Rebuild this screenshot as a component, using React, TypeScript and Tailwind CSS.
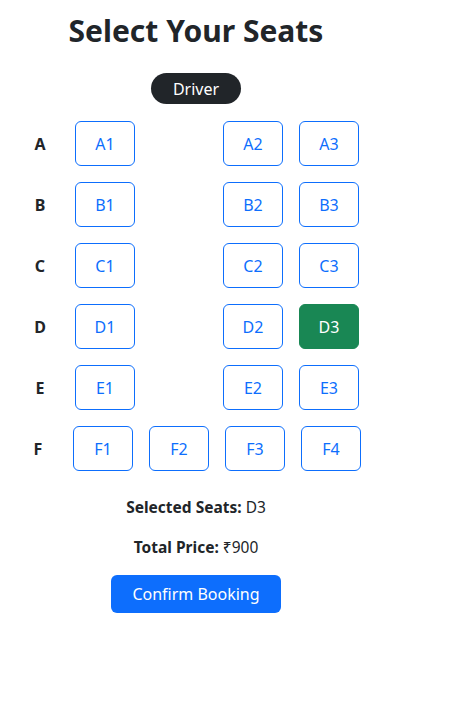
const rows: { label: string; seats: (string | null)[] }[] = [
	{ label: "A", seats: ["A1", null, "A2", "A3"] },
	{ label: "B", seats: ["B1", null, "B2", "B3"] },
	{ label: "C", seats: ["C1", null, "C2", "C3"] },
	{ label: "D", seats: ["D1", null, "D2", "D3"] },
	{ label: "E", seats: ["E1", null, "E2", "E3"] },
	{ label: "F", seats: ["F1", "F2", "F3", "F4"] },
];

const selected = ["D3"];

const Seat = ({ id }: { id: string }) => {
	const isSelected = selected.includes(id);
	return (
		<button
			className={
				isSelected
					? "w-[60px] h-[45px] mx-2 rounded-md border border-[#198754] bg-[#198754] text-white text-base"
					: "w-[60px] h-[45px] mx-2 rounded-md border border-[#0d6efd] bg-white text-[#0d6efd] text-base"
			}
		>
			{id}
		</button>
	);
};

const App = () => {
	return (
		<div
			className="w-[392px] flex flex-col items-center text-[#212529] bg-white min-h-[714px]"
			style={{ fontFamily: '"Noto Sans", "Open Sans", sans-serif' }}
		>
			<h2 className="mt-[13px] text-[30px] leading-[36px] font-bold">Select Your Seats</h2>
			<div className="mt-[24px] w-[90px] h-[31px] rounded-full bg-[#212529] text-white flex justify-center items-center text-base">
				Driver
			</div>
			<div className="mt-[9px] flex flex-col">
				{rows.map((row) => (
					<div key={row.label} className="flex flex-row justify-center items-center my-2">
						<span className="w-[30px] mr-3 text-center font-bold">{row.label}</span>
						{row.seats.map((s, i) =>
							s ? <Seat key={s} id={s} /> : <div key={i} className="w-[72px]"></div>
						)}
					</div>
				))}
			</div>
			<p className="mt-4 mb-4 leading-6 text-[15.5px]">
				<span className="font-bold">Selected Seats:</span> {selected.join(", ")}
			</p>
			<p className="mb-4 leading-6 text-[15.5px]">
				<span className="font-bold">Total Price:</span> ₹900
			</p>
			<button className="w-[170px] h-[38px] rounded-md bg-[#0d6efd] text-white text-base">
				Confirm Booking
			</button>
		</div>
	);
};

export default App;
